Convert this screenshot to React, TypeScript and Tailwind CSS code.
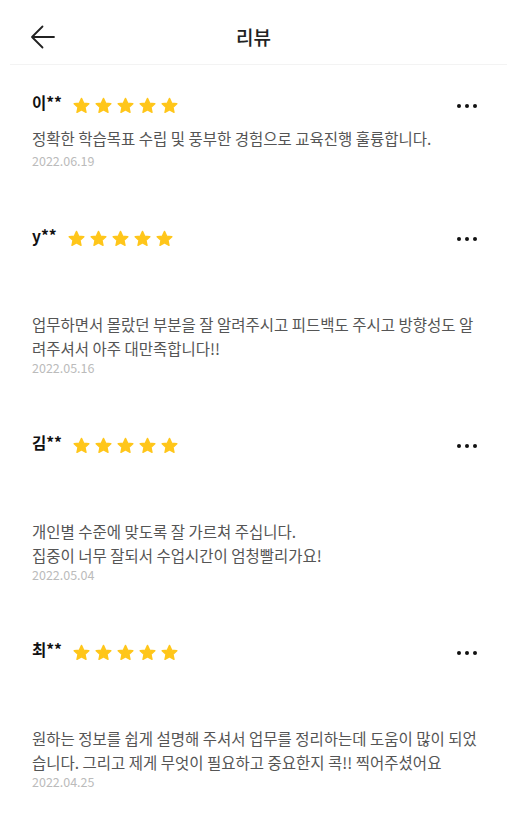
import React from 'react';

interface Review {
  name: string;
  rating: number;
  lines: string;
  date: string;
  spacer?: boolean;
}

const reviews: Review[] = [
  {
    name: '이**',
    rating: 5,
    lines: '정확한 학습목표 수립 및 풍부한 경험으로 교육진행 훌륭합니다.',
    date: '2022.06.19',
  },
  {
    name: 'y**',
    rating: 5,
    lines: '업무하면서 몰랐던 부분을 잘 알려주시고 피드백도 주시고 방향성도 알려주셔서 아주 대만족합니다!!',
    date: '2022.05.16',
    spacer: true,
  },
  {
    name: '김**',
    rating: 5,
    lines: '개인별 수준에 맞도록 잘 가르쳐 주십니다.\n집중이 너무 잘되서 수업시간이 엄청빨리가요!',
    date: '2022.05.04',
    spacer: true,
  },
  {
    name: '최**',
    rating: 5,
    lines: '원하는 정보를 쉽게 설명해 주셔서 업무를 정리하는데 도움이 많이 되었습니다. 그리고 제게 무엇이 필요하고 중요한지 콕!! 찍어주셨어요',
    date: '2022.04.25',
    spacer: true,
  },
];

const Star = () => (
  <svg width="17" height="17" viewBox="-0.5 -0.5 21 21" className="shrink-0">
    <path
      d="M10 1.2L12.7 7.08 19.13 7.83 14.37 12.22 15.64 18.57 10 15.4 4.36 18.57 5.63 12.22 0.87 7.83 7.3 7.08Z"
      fill="#ffc61a"
      stroke="#ffc61a"
      strokeWidth="1.6"
      strokeLinejoin="round"
    />
  </svg>
);

const MoreDots = () => (
  <div className="flex items-center gap-[4px]">
    <span className="w-[4px] h-[4px] rounded-full bg-[#111]" />
    <span className="w-[4px] h-[4px] rounded-full bg-[#111]" />
    <span className="w-[4px] h-[4px] rounded-full bg-[#111]" />
  </div>
);

const ReviewItem: React.FC<{ review: Review }> = ({ review }) => (
  <div className="flex flex-col">
    <div className="flex items-center h-[26px] pr-[30px]">
      <span className="text-[15.5px] font-bold text-[#111] leading-[20px] mb-[6px] mr-[11px]">
        {review.name}
      </span>
      <div className="flex items-center gap-[5px]">
        {Array.from({ length: review.rating }).map((_, i) => (
          <Star key={i} />
        ))}
      </div>
      <div className="ml-auto mt-[2px]">
        <MoreDots />
      </div>
    </div>
    <p
      className={`pr-[22px] text-[15.5px] leading-[24px] text-[#555] whitespace-pre-line ${
        review.spacer ? 'mt-[61px]' : 'mt-[8px]'
      }`}
    >
      {review.lines}
    </p>
    <span
      className={`text-[12.5px] leading-[18px] text-[#bbb] ${review.spacer ? '-mt-px' : 'mt-[2px]'}`}
    >
      {review.date}
    </span>
  </div>
);

export default function App() {
  return (
    <div
      className="w-[507px] min-h-[829px] bg-white"
      style={{ fontFamily: '"Noto Sans CJK KR", "Noto Sans", sans-serif' }}
    >
      <header className="relative flex items-center justify-center h-[64px] pt-2">
        <button className="absolute left-[30px] top-[24px] w-[26px] h-[26px] flex items-center justify-center">
          <svg width="26" height="26" viewBox="0 0 26 26" fill="none">
            <path
              d="M24 13H2.5M12.5 2.5L2 13l10.5 10.5"
              stroke="#222"
              strokeWidth="1.8"
              strokeLinecap="round"
              strokeLinejoin="round"
            />
          </svg>
        </button>
        <h1 className="text-[19px] font-medium text-[#222] leading-none">리뷰</h1>
      </header>
      <div className="ml-[10px] h-px bg-[#f3f3f3]" />
      <main className="flex flex-col gap-[55px] pl-[32px] pt-[27px] pb-10">
        {reviews.map((r) => (
          <ReviewItem key={r.date} review={r} />
        ))}
      </main>
    </div>
  );
}
